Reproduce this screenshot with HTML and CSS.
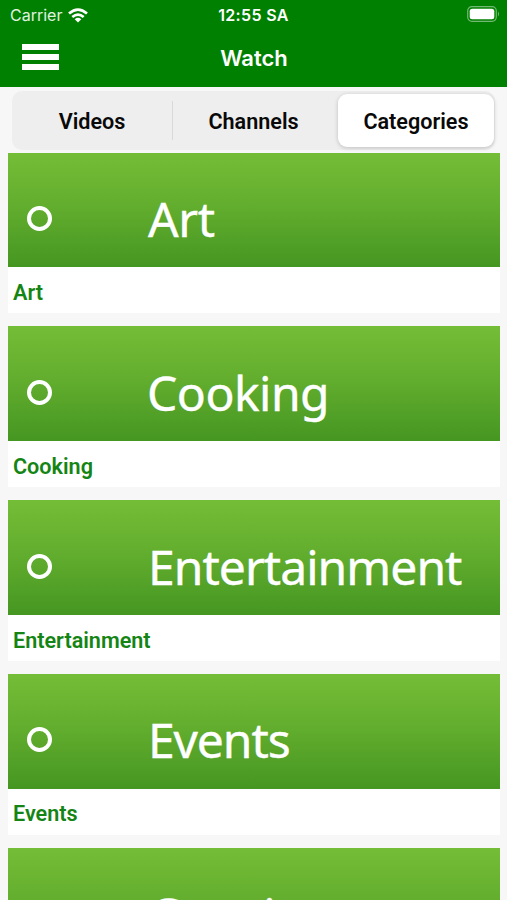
FILE: index.html
```html
<!DOCTYPE html>
<html lang="en">
<head>
<meta charset="utf-8">
<title>Watch</title>
<link rel="stylesheet" href="styles.css">
</head>
<body>
<header class="header">
  <div class="status">
    <div class="carrier"><span>Carrier</span>
      <svg class="wifi" viewBox="0 0 20 15" width="20" height="15"><g fill="none" stroke="#fff" stroke-width="2.7"><path d="M1 5.6Q10-2.2 19 5.6"/><path d="M4.3 9Q10 4.2 15.7 9"/></g><path d="M6.7 11.2Q10 8.5 13.3 11.2L10 14.6Z" fill="#fff"/></svg>
    </div>
    <span class="time">12:55 SA</span>
    <svg class="battery" viewBox="0 0 33 16" width="33" height="16"><rect x=".7" y=".7" width="28.6" height="14.6" rx="4.2" fill="none" stroke="#73b873" stroke-width="1.2"/><rect x="2.7" y="2.7" width="24.6" height="10.6" rx="2.5" fill="#fff"/><path d="M31 5.5Q33 8 31 10.5Z" fill="#73b873"/></svg>
  </div>
  <div class="nav">
    <button class="menu" aria-label="Menu"><i></i><i></i><i></i></button>
    <h1>Watch</h1>
  </div>
</header>
<nav class="tabs">
  <span class="tab">Videos</span>
  <span class="tab divided">Channels</span>
  <span class="tab active">Categories</span>
</nav>
<main class="list">
  <article class="card"><div class="banner"><i class="ring"></i><span class="name art">Art</span></div><h2>Art</h2></article>
  <article class="card"><div class="banner"><i class="ring"></i><span class="name cooking">Cooking</span></div><h2>Cooking</h2></article>
  <article class="card"><div class="banner"><i class="ring"></i><span class="name entertainment">Entertainment</span></div><h2>Entertainment</h2></article>
  <article class="card"><div class="banner"><i class="ring"></i><span class="name events">Events</span></div><h2>Events</h2></article>
  <article class="card"><div class="banner"><i class="ring"></i><span class="name gaming">Gaming</span></div></article>
</main>
</body>
</html>
```
FILE: styles.css
```css
* { box-sizing: border-box; }
body { margin: 0; height: 900px; display: flex; flex-direction: column; overflow: hidden; background: #f7f7f7; font-family: Roboto, sans-serif; }
.header { flex: none; height: 87px; background: #008000; color: #fff; font-family: Inter, sans-serif; }
.status { height: 30px; display: grid; grid-template-columns: 1fr auto 1fr; align-items: center; padding: 0 7px 0 10px; }
.carrier { display: flex; align-items: center; gap: 6px; font-size: 16px; color: #e0f2e0; }
.time { margin: 0 1.5px 0 -1.5px; font-size: 16px; font-weight: 600; letter-spacing: 0.35px; }
.battery { justify-self: end; margin-top: -2px; }
.nav { height: 56px; display: grid; grid-template-columns: 60px 1fr 60px; align-items: center; }
.menu { display: flex; flex-direction: column; gap: 4px; width: 37px; margin: -2px 0 0 22px; padding: 0; border: 0; background: none; }
.menu i { height: 6.3px; background: #fff; }
h1 { margin: 0 0 0 1px; text-align: center; font-size: 22px; font-weight: 600; }
.tabs { flex: none; display: grid; grid-template-columns: 160px 166px 156px; height: 59px; margin: 4px 12px 2.6px; padding: 3px 1px 3px 0; border-radius: 10px; background: #eee; }
.tab { display: flex; align-items: center; justify-content: center; padding-top: 2px; font-size: 21.6px; font-weight: 600; color: #090909; }
.divided { background: linear-gradient(#d9d9d9, #d9d9d9) 0 50% / 1px 39px no-repeat; padding-right: 3px; }
.active { border-radius: 9px; background: #fff; box-shadow: 0 1px 4px #0003; }
.list { flex: 1; min-height: 0; overflow: hidden; display: flex; flex-direction: column; gap: 13px; padding: 0 7px 0 8px; }
.card { height: 160.9px; background: #fff; flex: none; }
.banner { height: 114.4px; display: flex; align-items: center; padding: 17px 0 0 19px; background: linear-gradient(#74bd37, #63ae2e 45%, #459622); }
.ring { width: 25px; height: 25px; border: 4px solid #fff; border-radius: 50%; }
.name { margin: 1px 0 0 96px; font: 48px/60px "Noto Sans", sans-serif; color: #fff; white-space: nowrap; -webkit-text-stroke: 0.4px #fff; }
.art { letter-spacing: -0.4px; }
.cooking { margin-left: 95px; letter-spacing: -0.5px; }
.entertainment { letter-spacing: -0.95px; }
.events { letter-spacing: -1.1px; }
.gaming { margin-top: 2px; letter-spacing: 2.8px; }
h2 { margin: 0; padding: 10.8px 5px 0; font-size: 21.6px; line-height: 30px; font-weight: 600; color: #148514; }
```
